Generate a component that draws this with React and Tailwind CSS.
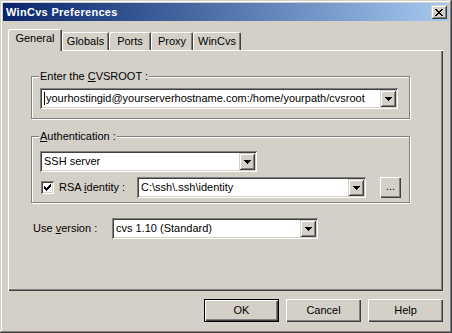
import React from "react";

const sunken =
  "shadow-[inset_1px_1px_0_#808080,inset_-1px_-1px_0_#fff,inset_2px_2px_0_#404040,inset_-2px_-2px_0_#d4d0c8]";
const raised =
  "shadow-[inset_1px_1px_0_#fff,inset_-1px_-1px_0_#404040,inset_-2px_-2px_0_#808080]";
const dropRaised =
  "shadow-[inset_1px_1px_0_#d4d0c8,inset_-1px_-1px_0_#404040,inset_2px_2px_0_#fff,inset_-2px_-2px_0_#808080]";
const etched =
  "border border-[#808080] shadow-[1px_1px_0_#fff,inset_1px_1px_0_#fff]";

const DownArrow = () => (
  <svg width="7" height="4" shapeRendering="crispEdges">
    <path d="M0 0h7v1H6v1H5v1H4v1H3V3H2V2H1V1H0z" fill="#000" />
  </svg>
);

function Combo({ className, children }) {
  return (
    <div className={`flex h-[21px] bg-white p-[2px] ${sunken} ${className}`}>
      <div className="flex-1 flex items-center pl-[2px] overflow-hidden whitespace-nowrap">
        {children}
      </div>
      <div
        className={`w-[16px] h-full flex items-center justify-center bg-[#d4d0c8] ${dropRaised}`}
      >
        <DownArrow />
      </div>
    </div>
  );
}

const tabs = [
  { name: "General", w: "w-[54px]" },
  { name: "Globals", w: "w-[47px]" },
  { name: "Ports", w: "w-[42px]" },
  { name: "Proxy", w: "w-[42px]" },
  { name: "WinCvs", w: "w-[48px]" },
];

function GroupLabel({ children }) {
  return (
    <div className="-mt-[7px] ml-[7px] px-[1px] w-fit h-[13px] leading-[13px] bg-[#d4d0c8]">
      {children}
    </div>
  );
}

export default function App() {
  return (
    <div className="w-[452px] h-[333px] overflow-hidden bg-[#d4d0c8] p-[3px] text-[11px] leading-[13px] text-black font-['Liberation_Sans',Arial,sans-serif] shadow-[inset_-1px_-1px_0_#404040,inset_1px_1px_0_#d4d0c8,inset_-2px_-2px_0_#808080,inset_2px_2px_0_#fff]">
      {/* Title bar */}
      <div className="h-[18px] flex items-center justify-between pl-[3px] pr-[2px] bg-linear-to-r from-[#0a246a] to-[#a6caf0]">
        <span className="text-white font-bold tracking-[0.3px]">
          WinCvs Preferences
        </span>
        <div
          className={`w-[16px] h-[14px] flex items-center justify-center bg-[#d4d0c8] ${dropRaised}`}
        >
          <svg width="8" height="7" shapeRendering="crispEdges">
            <path
              d="M0 0h2v1h1v1h2V1h1V0h2v1H7v1H6v1H5v1h1v1h1v1h1v1H6V6H5V5H3v1H2v1H0V6h1V5h1V4h1V3H2V2H1V1H0z"
              fill="#000"
            />
          </svg>
        </div>
      </div>

      {/* Tabs */}
      <div className="mt-[8px] ml-[5px] h-[21px] flex items-end">
        {tabs.map((t, i) =>
          i === 0 ? (
            <div
              key={t.name}
              className={`${t.w} h-[22px] -mb-px relative z-10 bg-[#d4d0c8] rounded-t-[2px] pt-[3px] text-center shadow-[inset_1px_1px_0_#fff,inset_-1px_0_0_#404040,inset_-2px_0_0_#808080]`}
            >
              {t.name}
            </div>
          ) : (
            <div
              key={t.name}
              className={`${t.w} h-[18px] bg-[#d4d0c8] rounded-t-[2px] pt-[3px] text-center shadow-[inset_1px_1px_0_#fff,inset_-1px_0_0_#404040,inset_-2px_0_0_#808080]`}
            >
              {t.name}
            </div>
          )
        )}
      </div>

      {/* Panel */}
      <div className="ml-[5px] w-[435px] h-[241px] pl-[23px] pt-[26px] shadow-[inset_1px_1px_0_#fff,inset_-1px_-1px_0_#404040,inset_-2px_-2px_0_#808080]">
        {/* CVSROOT group */}
        <div className={`w-[379px] h-[43px] ${etched}`}>
          <GroupLabel>
            Enter the <span className="underline">C</span>VSROOT :
          </GroupLabel>
          <Combo className="mt-[5px] ml-[8px] w-[358px]">
            <span className="w-px h-[13px] bg-black mr-[1px]" />
            yourhostingid@yourserverhostname.com:/home/yourpath/cvsroot
          </Combo>
        </div>

        {/* Authentication group */}
        <div className={`mt-[17px] w-[379px] h-[67px] ${etched}`}>
          <GroupLabel>
            <span className="underline">A</span>uthentication :
          </GroupLabel>
          <Combo className="mt-[8px] ml-[8px] w-[217px]">SSH server</Combo>
          <div className="mt-[5px] h-[21px] flex items-center">
            <div
              className={`ml-[9px] w-[13px] h-[13px] bg-white flex items-center justify-center ${sunken}`}
            >
              <svg width="7" height="7" shapeRendering="crispEdges">
                <path
                  d="M6 0h1v3H6v1H5v1H4v1H3v1H2V6H1V5H0V2h1v1h1v1h1V3h1V2h1V1h1z"
                  fill="#000"
                />
              </svg>
            </div>
            <span className="ml-[5px] w-[78px]">
              RSA <span className="underline">i</span>dentity :
            </span>
            <Combo className="w-[229px]">C:\ssh\.ssh\identity</Combo>
            <div
              className={`ml-[14px] w-[21px] h-[21px] flex items-center justify-center bg-[#d4d0c8] ${raised}`}
            >
              <span className="-mt-[2px]">...</span>
            </div>
          </div>
        </div>

        {/* Version row */}
        <div className="mt-[15px] flex items-center">
          <span className="ml-[2px] w-[79px]">
            Use <span className="underline">v</span>ersion :
          </span>
          <Combo className="w-[206px]">cvs 1.10 (Standard)</Combo>
        </div>
      </div>

      {/* Buttons */}
      <div className="mt-[8px] ml-[5px] w-[435px] flex justify-end gap-[7px]">
        <div className="w-[75px] h-[23px] border border-black">
          <div
            className={`w-full h-full flex items-center justify-center ${raised}`}
          >
            OK
          </div>
        </div>
        <div
          className={`w-[75px] h-[23px] flex items-center justify-center ${raised}`}
        >
          Cancel
        </div>
        <div
          className={`w-[75px] h-[23px] flex items-center justify-center ${raised}`}
        >
          Help
        </div>
      </div>
    </div>
  );
}
